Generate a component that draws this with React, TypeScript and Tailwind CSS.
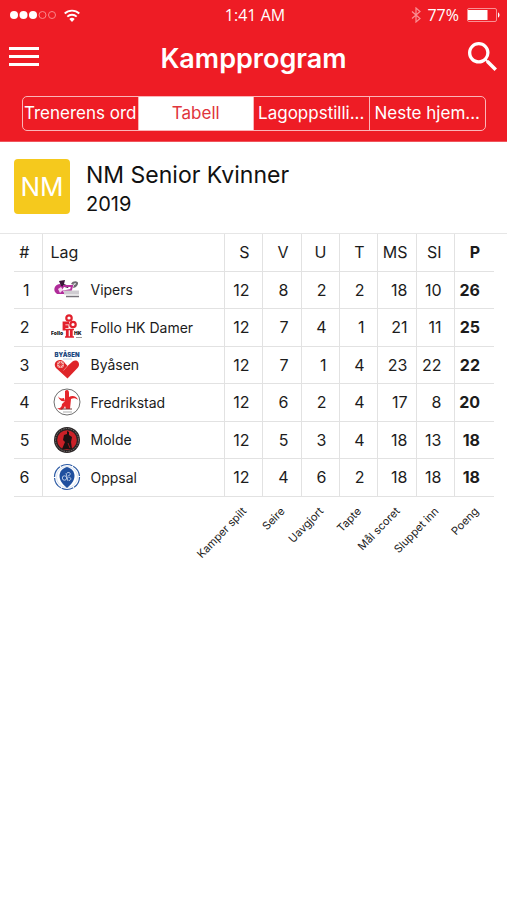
import { useState } from 'react';
import type { ReactNode } from 'react';
import clsx from 'clsx';

interface Team {
  name: string;
  logo: ReactNode;
  stats: number[];
  points: number;
}

const TABS = ['Trenerens ord', 'Tabell', 'Lagoppstilli...', 'Neste hjem...'];

const COLUMNS = [
  { short: 'S', label: 'Kamper spilt', width: 'w-[38px]', pad: 'pr-3' },
  { short: 'V', label: 'Seire', width: 'w-[39px]', pad: 'pr-3' },
  { short: 'U', label: 'Uavgjort', width: 'w-[38px]', pad: 'pr-3' },
  { short: 'T', label: 'Tapte', width: 'w-[38px]', pad: 'pr-3' },
  { short: 'MS', label: 'Mål scoret', width: 'w-[39px]', pad: 'pr-2' },
  { short: 'SI', label: 'Sluppet inn', width: 'w-[38px]', pad: 'pr-3' },
];

function VipersLogo() {
  return (
    <svg viewBox="0 0 32 30" className="h-[30px] w-8" aria-hidden="true">
      <path d="M4 17c-2-4 1-8 5-8l4 3-2 3 3 4H6z" fill="#b02c9a" />
      <path d="M7 14l3-2 2 3-3 3z" fill="#f3d5ee" />
      <path d="M8 6l6-1-1 4 5 2-1 2-7-2z" fill="#3a1738" />
      <path d="M12 11h9l-1 4-5 1 6 2" fill="none" stroke="#b5309d" strokeWidth="2" />
      <path d="M20 9c2-4 8-3 7 0-1 3-4 4-5 4l1-3z" fill="#6d6a70" />
      <path d="M22 9l3-1-1 2z" fill="#fff" />
      <path d="M13 17.500h15" stroke="#cfccd1" strokeWidth="4" />
      <path d="M15 21.500h13" stroke="#77737a" strokeWidth="1.500" />
    </svg>
  );
}

function FolloLogo() {
  return (
    <svg viewBox="0 0 32 30" className="h-[30px] w-8" aria-hidden="true">
      <g fill="none" stroke="#e2202c">
        <circle cx="18" cy="6" r="2.700" strokeWidth="2.200" />
        <circle cx="22" cy="12.500" r="2.700" strokeWidth="2.200" />
        <path d="M13 18.500V11H18M13 14.700H17.500" strokeWidth="2.800" />
        <path d="M16.300 17v8M20.300 17v8" strokeWidth="2.800" />
        <path d="M14 17.500h9M14 25h9" strokeWidth="1.500" />
      </g>
      <text x="0" y="23" fontSize="5" fontWeight="900" fontFamily="Inter, sans-serif" fill="#222">Follo</text>
      <text x="23" y="23" fontSize="5" fontWeight="900" fontFamily="Inter, sans-serif" fill="#222">HK</text>
      <path d="M25 25.500h6" stroke="#999" />
    </svg>
  );
}

function ByasenLogo() {
  return (
    <svg viewBox="0 0 32 30" className="h-[30px] w-8" aria-hidden="true">
      <text x="16" y="7" textAnchor="middle" fontSize="6" fontWeight="900" fontFamily="Inter, sans-serif" fill="#1d4a80">BYÅSEN</text>
      <path d="M12 9h9" stroke="#c3d1e0" strokeWidth="1" />
      <path d="M16.500 28.500L5 18c-3-4 0-8 4-8 3 0 4 2 7.500 6l5-4.500c3-2.500 7-.5 6.500 3.500-.2 1.500-1 2.500-2 3.500z" fill="#df2529" />
      <circle cx="9.500" cy="14.500" r="3.500" fill="#f5b5b0" />
      <path d="M9.500 11.500v6M6.500 14.500h6M7.500 12.500l4 4M11.500 12.500l-4 4" stroke="#df2529" strokeWidth="0.700" />
      <path d="M12.500 20.500l4-4.500" stroke="#f3a6a4" strokeWidth="0.700" />
    </svg>
  );
}

function FredrikstadLogo() {
  return (
    <svg viewBox="0 0 32 30" className="h-[30px] w-8" aria-hidden="true">
      <circle cx="16" cy="15" r="13" fill="#fff" stroke="#6f6f6f" strokeWidth="1" />
      <path d="M14 4c2-2 4-1 4 2v4c3-2 8-1 9 3-2-2-5-2-7-1l-1 10h-4l-1-3c-1 4-5 5-8 2 3 1 5-1 5-4l3-3z" fill="#e5262b" />
      <path d="M7 9c1 2 3 3 6 2l1 3c-3 1-6-1-7-5z" fill="#e5262b" />
      <path d="M10 22h11" stroke="#7a3a3a" strokeWidth="1" />
      <path d="M12 25h9" stroke="#c9c9c9" strokeWidth="1.500" />
    </svg>
  );
}

function MoldeLogo() {
  return (
    <svg viewBox="0 0 32 30" className="h-[30px] w-8" aria-hidden="true">
      <circle cx="16" cy="15" r="13" fill="#2a2425" />
      <circle cx="16" cy="15" r="11.500" fill="none" stroke="#8a8482" strokeWidth="0.800" strokeDasharray="1.500 1" />
      <circle cx="16" cy="15" r="9.800" fill="#cb2027" />
      <path d="M16 6l2 1v3l3 2-1 5 1 7H11l3-7-2-2 1-5 3-1z" fill="#1c1112" />
      <path d="M17 18l2 5" stroke="#9b1a20" strokeWidth="1" />
    </svg>
  );
}

function OppsalLogo() {
  return (
    <svg viewBox="0 0 32 30" className="h-[30px] w-8" aria-hidden="true">
      <circle cx="16" cy="15" r="12.500" fill="#fff" stroke="#2d5ba5" strokeWidth="1.200" strokeDasharray="12 1" />
      <circle cx="16" cy="15" r="10.500" fill="none" stroke="#dbe4f2" strokeWidth="1" />
      <path d="M16 5c4 1 7.500 4 7.500 9 0 5-4 9-7.500 12-3.500-3-7.500-7-7.500-12 0-5 3.500-8 7.500-9z" fill="#1f4f9e" />
      <g fill="none" stroke="#c5d4ec" strokeWidth="0.900">
        <circle cx="13.500" cy="16" r="2.200" />
        <path d="M15 11l2 8M16 11c3-2 5 2 1 3M17.500 15.500c3-1 3 3 .5 3" />
      </g>
    </svg>
  );
}

const TEAMS: Team[] = [
  { name: 'Vipers', logo: <VipersLogo />, stats: [12, 8, 2, 2, 18, 10], points: 26 },
  { name: 'Follo HK Damer', logo: <FolloLogo />, stats: [12, 7, 4, 1, 21, 11], points: 25 },
  { name: 'Byåsen', logo: <ByasenLogo />, stats: [12, 7, 1, 4, 23, 22], points: 22 },
  { name: 'Fredrikstad', logo: <FredrikstadLogo />, stats: [12, 6, 2, 4, 17, 8], points: 20 },
  { name: 'Molde', logo: <MoldeLogo />, stats: [12, 5, 3, 4, 18, 13], points: 18 },
  { name: 'Oppsal', logo: <OppsalLogo />, stats: [12, 4, 6, 2, 18, 18], points: 18 },
];

function StatusBar() {
  return (
    <div className="grid h-[30px] grid-cols-[1fr_auto_1fr] items-center pr-[7px] pl-[10px] font-['Open_Sans',sans-serif] text-[16px]">
      <div className="flex items-center gap-2">
        <svg viewBox="0 0 46 8" className="h-2 w-[46px]" aria-label="Signal">
          <circle cx="4" cy="4" r="4" fill="#fff" />
          <circle cx="13.500" cy="4" r="4" fill="#fff" />
          <circle cx="23" cy="4" r="4" fill="#fff" />
          <circle cx="32.500" cy="4" r="3.500" fill="none" stroke="#f9868b" />
          <circle cx="42" cy="4" r="3.500" fill="none" stroke="#f9868b" />
        </svg>
        <svg viewBox="0 0 16 13" className="h-[13px] w-4" aria-label="Wi-Fi">
          <g fill="none" stroke="#fff" strokeWidth="1.800">
            <path d="M0.700 4.500a10.500 10.500 0 0 1 14.600 0" />
            <path d="M3.300 7.700a6.700 6.700 0 0 1 9.400 0" />
          </g>
          <path d="M5.300 10a4 4 0 0 1 5.400 0L8 13z" fill="#fff" />
        </svg>
      </div>
      <span>1:41 AM</span>
      <div className="flex items-center justify-end">
        <svg viewBox="0 0 10 16" className="mr-[6px] h-4 w-[10px]" aria-label="Bluetooth">
          <path d="M1 4.500l8 7L5 15V1l4 3.500-8 7" fill="none" stroke="#f99094" strokeWidth="1.200" />
        </svg>
        <span className="mr-2">77%</span>
        <svg viewBox="0 0 33 14" className="h-[14px] w-[33px]" aria-label="Battery">
          <rect x="0.500" y="0.500" width="29" height="13" rx="1.500" fill="none" stroke="#f99094" />
          <rect x="1" y="2" width="19.500" height="10" fill="#fff" />
          <path d="M31 4.500c2 .5 2 4.500 0 5z" fill="#fff" />
        </svg>
      </div>
    </div>
  );
}

function Header() {
  const [active, setActive] = useState('Tabell');

  return (
    <header className="border-b border-[#f0555c] bg-[#ee1c25] pb-[10px] text-white">
      <StatusBar />
      <div className="flex h-[66px] items-start justify-between pr-[10px] pl-[9px]">
        <button type="button" aria-label="Meny" className="mt-[17px] flex w-[30px] flex-col gap-[5px]">
          <span className="h-[3px] w-full bg-white" />
          <span className="h-[3px] w-full bg-white" />
          <span className="h-[3px] w-full bg-white" />
        </button>
        <h1 className="mt-[11px] text-[27px] leading-[36px] font-semibold">Kampprogram</h1>
        <button type="button" aria-label="Søk" className="mt-3">
          <svg viewBox="3 3 17.500 17.500" className="h-[29px] w-[29px]" fill="#fff">
            <path d="M15.500 14h-.79l-.28-.27A6.470 6.470 0 0 0 16 9.500 6.500 6.500 0 1 0 9.500 16c1.610 0 3.090-.59 4.230-1.570l.27.28v.79l5 4.990L20.490 19l-4.990-5zm-6 0C7.010 14 5 11.990 5 9.500S7.010 5 9.500 5 14 7.010 14 9.500 11.990 14 9.500 14z" />
          </svg>
        </button>
      </div>
      <nav className="mr-[21px] ml-[22px] grid h-[35px] grid-cols-4 divide-x divide-[#fbb5b8] overflow-hidden rounded-[5px] border border-[#fbb5b8]">
        {TABS.map((tab) => (
          <button
            key={tab}
            type="button"
            onClick={() => setActive(tab)}
            className={clsx(
              'min-w-0 text-center text-[17px] whitespace-nowrap',
              tab === active ? 'bg-white text-[#e0353c]' : 'text-white'
            )}
          >
            {tab}
          </button>
        ))}
      </nav>
    </header>
  );
}

function Standings() {
  return (
    <div className="border-t border-[#e6e6e6] pr-[13px] pl-[14px]">
      <table className="w-full table-fixed border-collapse text-right text-[16px] text-[#1c1c1c]">
        <colgroup>
          <col className="w-[28px]" />
          <col />
          {COLUMNS.map((column) => (
            <col key={column.short} className={column.width} />
          ))}
          <col className="w-[40px]" />
        </colgroup>
        <thead>
          <tr className="h-[37px] border-b border-[#e2e2e2]">
            <th className="pr-3 font-normal">#</th>
            <th className="border-x border-[#e2e2e2] pl-2 text-left font-normal">Lag</th>
            {COLUMNS.map((column) => (
              <th key={column.short} className={clsx('border-r border-[#e2e2e2] font-normal', column.pad)}>
                {column.short}
              </th>
            ))}
            <th className="pr-[14px] font-bold">P</th>
          </tr>
        </thead>
        <tbody>
          {TEAMS.map((team, index) => (
            <tr key={team.name} className="border-b border-[#e2e2e2] odd:h-[37px] even:h-[38px]">
              <td className="pr-3">{index + 1}</td>
              <td className="border-x border-[#e2e2e2] pl-2">
                <div className="flex items-center gap-2 text-[14px]">
                  {team.logo}
                  {team.name}
                </div>
              </td>
              {team.stats.map((value, i) => (
                <td key={COLUMNS[i].short} className={clsx('border-r border-[#e2e2e2]', COLUMNS[i].pad)}>
                  {value}
                </td>
              ))}
              <td className="pr-[14px] font-bold">{team.points}</td>
            </tr>
          ))}
        </tbody>
        {/* Slanted legend for the short column names */}
        <tfoot>
          <tr className="text-[11px] leading-3">
            <td colSpan={2} />
            {[...COLUMNS.map((column) => column.label), 'Poeng'].map((label) => (
              <td key={label} className="pt-[6px] pr-[18px]">
                <div className="flex justify-end">
                  <span className="origin-right -rotate-46 whitespace-nowrap">{label}</span>
                </div>
              </td>
            ))}
          </tr>
        </tfoot>
      </table>
    </div>
  );
}

export default function App() {
  return (
    <div className="min-h-screen bg-white font-[Inter,sans-serif]">
      <Header />
      <main>
        <section className="flex items-start gap-4 px-[14px] pt-[17px] pb-4">
          <div className="flex h-[55px] w-[56px] items-center justify-center rounded-[4px] bg-[#f5c91d] text-[26px] text-white">
            NM
          </div>
          <div className="text-[#111]">
            <h2 className="text-[23px] leading-[32px]">NM Senior Kvinner</h2>
            <p className="text-[20px] leading-[26px]">2019</p>
          </div>
        </section>
        <Standings />
      </main>
    </div>
  );
}
